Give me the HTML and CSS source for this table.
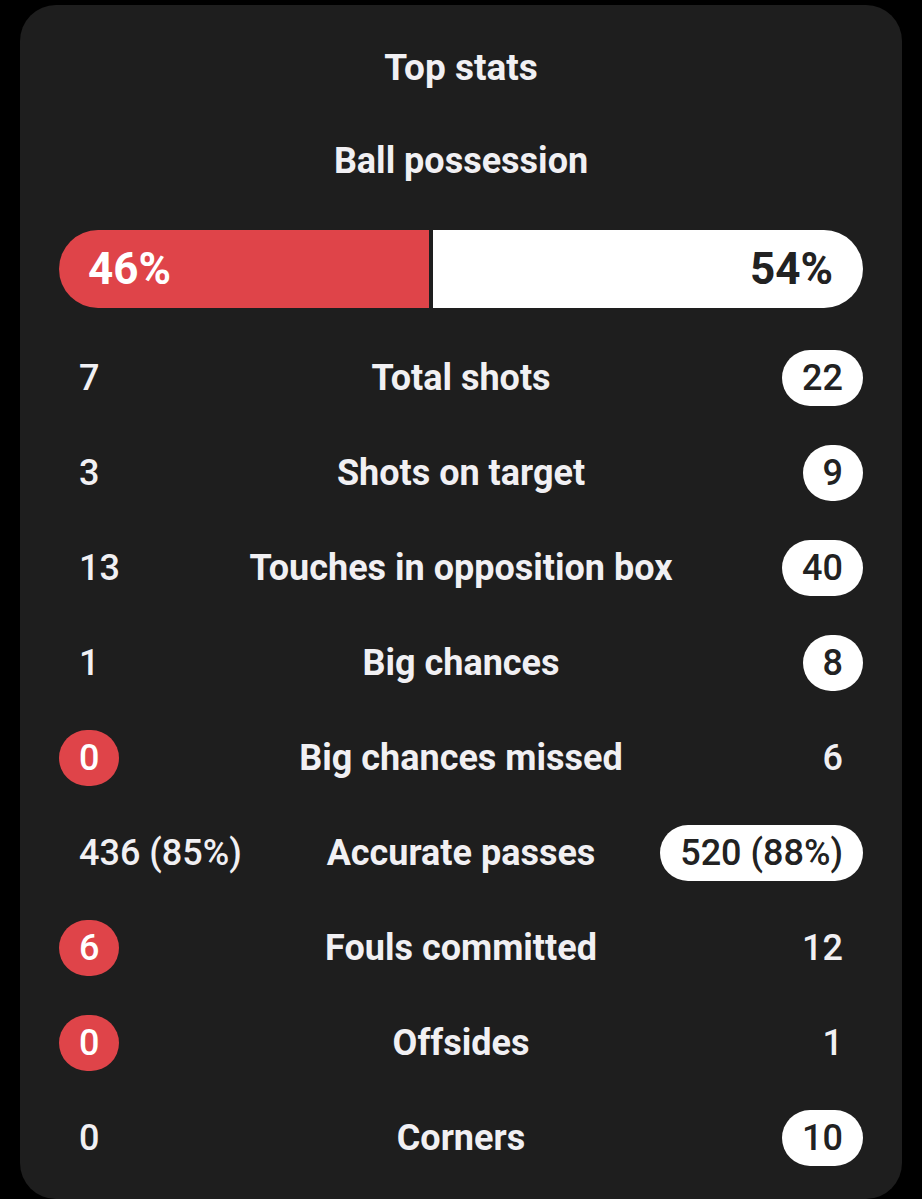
FILE: index.html
```html
<!DOCTYPE html>
<html>
<head>
<meta charset="utf-8">
<link rel="stylesheet" href="styles.css">
</head>
<body>
<div class="card">
  <div class="title">Top stats</div>
  <div class="subtitle">Ball possession</div>
  <div class="bar">
    <div class="bar-home" style="flex: 46">46%</div>
    <div class="bar-away" style="flex: 54">54%</div>
  </div>
  <div class="rows">
    <div class="row"><div class="home"><span class="val">7</span></div><div class="label">Total shots</div><div class="away"><span class="val pill">22</span></div></div>
    <div class="row"><div class="home"><span class="val">3</span></div><div class="label">Shots on target</div><div class="away"><span class="val pill">9</span></div></div>
    <div class="row"><div class="home"><span class="val">13</span></div><div class="label">Touches in opposition box</div><div class="away"><span class="val pill">40</span></div></div>
    <div class="row"><div class="home"><span class="val">1</span></div><div class="label">Big chances</div><div class="away"><span class="val pill">8</span></div></div>
    <div class="row"><div class="home"><span class="val red">0</span></div><div class="label">Big chances missed</div><div class="away"><span class="val">6</span></div></div>
    <div class="row"><div class="home"><span class="val">436 (85%)</span></div><div class="label">Accurate passes</div><div class="away"><span class="val pill">520 (88%)</span></div></div>
    <div class="row"><div class="home"><span class="val red">6</span></div><div class="label">Fouls committed</div><div class="away"><span class="val">12</span></div></div>
    <div class="row"><div class="home"><span class="val red">0</span></div><div class="label">Offsides</div><div class="away"><span class="val">1</span></div></div>
    <div class="row"><div class="home"><span class="val">0</span></div><div class="label">Corners</div><div class="away"><span class="val pill">10</span></div></div>
  </div>
</div>
</body>
</html>
```

FILE: styles.css
```css
html, body {
  margin: 0;
  padding: 0;
  background: #000;
}
body {
  font-family: Roboto, "Liberation Sans", sans-serif;
  color: #f1f0f3;
}
.card {
  margin: 5px 20px 0;
  background: #1e1e1e;
  border-radius: 36px;
  padding: 39px 39px 14px;
  height: 1194px;
  box-sizing: border-box;
}
.title, .subtitle {
  text-align: center;
  font-size: 36px;
  font-weight: 700;
  line-height: 48px;
  height: 48px;
}
.title {
  font-size: 37px;
}
.subtitle {
  margin-top: 45px;
}
.bar {
  margin-top: 45px;
  display: flex;
  gap: 4px;
  height: 78px;
}
.bar-home, .bar-away {
  display: flex;
  align-items: center;
  font-size: 44px;
  font-weight: 700;
}
.bar-home {
  background: #df4449;
  color: #fff;
  border-radius: 39px 0 0 39px;
  padding-left: 29px;
}
.bar-away {
  background: #fff;
  color: #222;
  border-radius: 0 39px 39px 0;
  justify-content: flex-end;
  padding-right: 30px;
}
.rows {
  margin-top: 22px;
  display: flex;
  flex-direction: column;
}
.row {
  height: 95px;
  display: grid;
  grid-template-columns: 1fr auto 1fr;
  align-items: center;
}
.home, .away {
  display: flex;
}
.away {
  justify-content: flex-end;
}
.label {
  text-align: center;
  white-space: nowrap;
  font-size: 36px;
  font-weight: 700;
}
.val {
  display: inline-flex;
  align-items: center;
  justify-content: center;
  height: 56px;
  min-width: 19px;
  padding: 0 20px;
  border-radius: 28px;
  font-size: 36px;
  font-weight: 500;
  white-space: nowrap;
}
.pill {
  background: #fff;
  color: #222;
}
.red {
  background: #df4449;
  color: #fff;
}
```
